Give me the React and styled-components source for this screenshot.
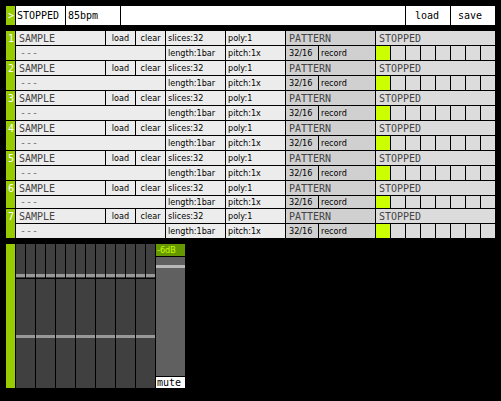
import React from "react";
import styled, { createGlobalStyle } from "styled-components";

const Global = createGlobalStyle`
  * { box-sizing: border-box; }
  body { margin: 0; background: #000; }
`;

const MONO = '"DejaVu Sans Mono", monospace';
const SANS = '"DejaVu Sans Condensed", "DejaVu Sans", sans-serif';
const GREEN = "#99cc00";

const Page = styled.main`
  display: flex;
  flex-direction: column;
  gap: 6px;
  padding: 6px;
  background: #000;
  font: 10px/14px ${MONO};
  color: #000;
`;

const Transport = styled.header`
  display: grid;
  grid-template-columns: 9px 49px 54px 1fr 44px 44px;
  gap: 1px;
  height: 19px;
`;

const Tab = styled.div`
  background: ${GREEN};
  color: #fff;
  padding-left: 2px;
  line-height: ${(p) => p.$line || 15}px;
  overflow: hidden;
`;

const Button = styled.button`
  appearance: none;
  border: 0;
  border-radius: 0;
  margin: 0;
  padding: 0 0 0 ${(p) => p.$inset || 0}px;
  background: ${(p) => p.$bg || "#ececec"};
  color: #000;
  font: ${(p) => (p.$mono ? `10px/14px ${MONO}` : `9px/14px ${SANS}`)};
  line-height: ${(p) => (p.$short ? 11 : 14)}px;
  text-align: ${(p) => (p.$center ? "center" : "left")};
  white-space: nowrap;
  cursor: pointer;
`;

const Blank = styled.div`
  background: #fff;
`;

const Tracks = styled.section`
  display: flex;
  flex-direction: column;
  gap: 1px;
`;

const Track = styled.article`
  display: grid;
  grid-template-columns: 9px 149px 59px 59px 89px 1fr;
  column-gap: 1px;
`;

const Block = styled.div`
  display: grid;
  grid-template-rows: 14px ${(p) => (p.$short ? 12 : 14)}px;
  row-gap: 1px;

  > * {
    min-height: 0;
    line-height: ${(p) => (p.$short ? 12 : 14)}px;
  }
`;

const Row = styled.div`
  display: grid;
  grid-template-columns: ${(p) => p.$cols};
  grid-template-rows: minmax(0, 1fr);
  gap: 1px;
`;

const Title = styled.div`
  && {
    background: ${(p) => p.$bg || "#ececec"};
    color: #444;
    padding-left: 3px;
    line-height: 15px;
    overflow: hidden;
  }
`;

const Empty = styled.div`
  background: #ececec;
  color: #777;
  padding-left: 4px;
`;

const Step = styled.button`
  appearance: none;
  border: 0;
  border-radius: 0;
  padding: 0;
  background: ${(p) => (p.$on ? "#ccff00" : "#dcdcdc")};
`;

const Mixer = styled.section`
  display: grid;
  grid-template-columns: 9px 139px 29px;
  grid-template-rows: minmax(0, 1fr);
  gap: 1px;
  height: 144px;
`;

const Sends = styled.div`
  display: grid;
  grid-template-rows: 34px minmax(0, 1fr);
  gap: 1px;
`;

const Faders = styled.div`
  display: grid;
  grid-template-columns: repeat(${(p) => p.$count}, minmax(0, 1fr));
  grid-template-rows: minmax(0, 1fr);
  gap: 1px;
`;

const Fader = styled.input`
  appearance: none;
  writing-mode: vertical-lr;
  direction: rtl;
  display: block;
  width: 100%;
  min-width: 0;
  height: 100%;
  min-height: 0;
  margin: 0;
  border-radius: 0;
  background: ${(p) => (p.$master ? "#606060" : "#404040")};

  &::-webkit-slider-thumb {
    appearance: none;
    width: ${(p) => p.$thumb}px;
    height: 3px;
    border: 0;
    border-radius: 0;
    background: ${(p) => (p.$master ? "#b8b8b8" : "#989898")};
  }
`;

const Master = styled.div`
  display: grid;
  grid-template-rows: 12px minmax(0, 1fr) 11px;
  gap: 1px;
`;

const Level = styled.output`
  background: #669900;
  color: #ccff00;
  padding-left: 1px;
  font: 9px/13px ${SANS};
`;

const Mute = styled(Button)`
  line-height: 10px;
`;

const tracks = [1, 2, 3, 4, 5, 6, 7];
const steps = [0, 1, 2, 3, 4, 5, 6, 7];
const highSends = Array.from({ length: 14 }, (_, i) => i + 1);

function TrackRow({ number }) {
  const short = number === 6;
  return (
    <Track aria-label={`Track ${number}`}>
      <Tab>{number}</Tab>
      <Block $short={short}>
        <Row $cols="1fr 29px 29px">
          <Title>SAMPLE</Title>
          <Button $center>load</Button>
          <Button $center>clear</Button>
        </Row>
        <Empty>---</Empty>
      </Block>
      <Block $short={short}>
        <Button $inset={2}>slices:32</Button>
        <Button $inset={2} $short={short}>length:1bar</Button>
      </Block>
      <Block $short={short}>
        <Button $inset={2}>poly:1</Button>
        <Button $inset={2} $short={short}>pitch:1x</Button>
      </Block>
      <Block $short={short}>
        <Title $bg="#d0d0d0">PATTERN</Title>
        <Row $cols="32px 1fr">
          <Button $bg="#d0d0d0" $inset={3} $short={short}>32/16</Button>
          <Button $bg="#d0d0d0" $inset={2} $short={short}>record</Button>
        </Row>
      </Block>
      <Block $short={short}>
        <Title $bg="#dcdcdc">STOPPED</Title>
        <Row $cols="repeat(8, 1fr)">
          {steps.map((s) => (
            <Step key={s} $on={s === 0} aria-label={`Step ${s + 1}`} />
          ))}
        </Row>
      </Block>
    </Track>
  );
}

export default function App() {
  return (
    <>
      <Global />
      <Page>
        <Transport>
          <Tab $line={20}>&gt;</Tab>
          <Button $mono $bg="#fff" $inset={1}>STOPPED</Button>
          <Button $mono $bg="#fff" $inset={2}>85bpm</Button>
          <Blank />
          <Button $mono $bg="#fff" $inset={9}>load</Button>
          <Button $mono $bg="#fff" $inset={7}>save</Button>
        </Transport>
        <Tracks>
          {tracks.map((n) => (
            <TrackRow key={n} number={n} />
          ))}
        </Tracks>
        <Mixer>
          <Tab />
          <Sends>
            <Faders $count={14}>
              {highSends.map((n) => (
                <Fader key={n} type="range" $thumb={9} defaultValue={3} aria-label={`Send ${n}`} />
              ))}
            </Faders>
            <Faders $count={7}>
              {tracks.map((n) => (
                <Fader key={n} type="range" $thumb={19} defaultValue={47} aria-label={`Volume ${n}`} />
              ))}
            </Faders>
          </Sends>
          <Master>
            <Level>-6dB</Level>
            <Fader $master type="range" $thumb={29} defaultValue={93} aria-label="Master volume" />
            <Mute $mono $bg="#fff" $inset={1}>mute</Mute>
          </Master>
        </Mixer>
      </Page>
    </>
  );
}
